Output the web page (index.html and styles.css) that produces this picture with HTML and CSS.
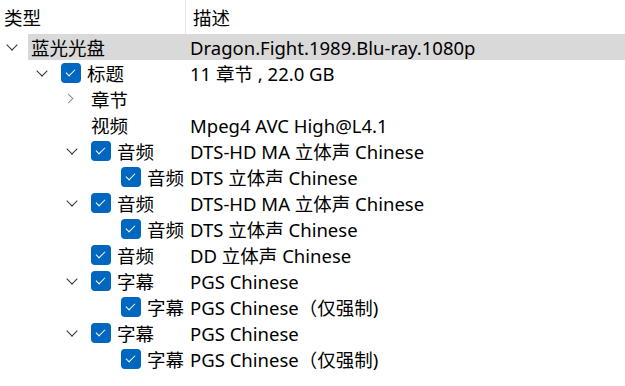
FILE: index.html
```html
<!DOCTYPE html>
<html lang="zh-CN">
<head>
  <meta charset="UTF-8" />
  <title>光盘结构</title>
  <link rel="stylesheet" href="styles.css">
</head>
<body>
  <div class="tree">
    <div class="head">
      <div class="head-type">类型</div>
      <div class="head-desc">描述</div>
    </div>

    <div class="row sel lv0">
      <div class="type"><span class="exp open"></span><span class="name">蓝光光盘</span></div>
      <div class="desc">Dragon.Fight.1989.Blu-ray.1080p</div>
    </div>
    <div class="row lv1">
      <div class="type"><span class="exp open"></span><span class="chk"></span><span class="name">标题</span></div>
      <div class="desc">11 章节 , 22.0 GB</div>
    </div>
    <div class="row lv2">
      <div class="type"><span class="exp closed"></span><span class="name">章节</span></div>
      <div class="desc"></div>
    </div>
    <div class="row lv2">
      <div class="type"><span class="exp"></span><span class="name">视频</span></div>
      <div class="desc">Mpeg4 AVC High@L4.1</div>
    </div>
    <div class="row lv2">
      <div class="type"><span class="exp open"></span><span class="chk"></span><span class="name">音频</span></div>
      <div class="desc">DTS-HD MA 立体声 Chinese</div>
    </div>
    <div class="row lv3">
      <div class="type"><span class="exp"></span><span class="chk"></span><span class="name">音频</span></div>
      <div class="desc">DTS 立体声 Chinese</div>
    </div>
    <div class="row lv2">
      <div class="type"><span class="exp open"></span><span class="chk"></span><span class="name">音频</span></div>
      <div class="desc">DTS-HD MA 立体声 Chinese</div>
    </div>
    <div class="row lv3">
      <div class="type"><span class="exp"></span><span class="chk"></span><span class="name">音频</span></div>
      <div class="desc">DTS 立体声 Chinese</div>
    </div>
    <div class="row lv2">
      <div class="type"><span class="exp"></span><span class="chk"></span><span class="name">音频</span></div>
      <div class="desc">DD 立体声 Chinese</div>
    </div>
    <div class="row lv2">
      <div class="type"><span class="exp open"></span><span class="chk"></span><span class="name">字幕</span></div>
      <div class="desc">PGS Chinese</div>
    </div>
    <div class="row lv3">
      <div class="type"><span class="exp"></span><span class="chk"></span><span class="name">字幕</span></div>
      <div class="desc">PGS Chinese（仅强制)</div>
    </div>
    <div class="row lv2">
      <div class="type"><span class="exp open"></span><span class="chk"></span><span class="name">字幕</span></div>
      <div class="desc">PGS Chinese</div>
    </div>
    <div class="row lv3">
      <div class="type"><span class="exp"></span><span class="chk"></span><span class="name">字幕</span></div>
      <div class="desc">PGS Chinese（仅强制)</div>
    </div>
  </div>
</body>
</html>
```

FILE: styles.css
```css
body {
  margin: 0;
  background-color: #fff;
  color: #000;
  font-family: "Noto Sans", "Noto Sans CJK SC", sans-serif;
  font-size: 18.5px;
}

.head {
  display: flex;
  height: 34px;
  align-items: center;
}

.head-type {
  width: 181px;
  height: 100%;
  padding-left: 4px;
  border-right: 1px solid #e5e5e5;
  display: flex;
  align-items: center;
}

.head-desc {
  padding-left: 7px;
}

.row {
  display: flex;
  height: 26px;
  align-items: center;
  white-space: nowrap;
}

/* 选中行的灰色背景从展开箭头后面开始 */
.row.sel {
  background: linear-gradient(to right, transparent 28px, #d9d9d9 28px);
}

.type {
  width: 190px;
  flex: none;
  display: flex;
  align-items: center;
  box-sizing: border-box;
}

.lv1 .type { padding-left: 30px; }
.lv2 .type { padding-left: 60px; }
.lv3 .type { padding-left: 90px; }

.exp {
  width: 31px;
  height: 26px;
  flex: none;
  position: relative;
}

.exp.open::before {
  content: "";
  position: absolute;
  left: 8px;
  top: 7px;
  width: 7px;
  height: 7px;
  border-right: 1.3px solid #333;
  border-bottom: 1.3px solid #333;
  transform: rotate(45deg);
}

.exp.closed::before {
  content: "";
  position: absolute;
  left: 5px;
  top: 9px;
  width: 6px;
  height: 6px;
  border-right: 1.3px solid #8a8a8a;
  border-bottom: 1.3px solid #8a8a8a;
  transform: rotate(-45deg);
}

.chk {
  width: 20px;
  height: 20px;
  flex: none;
  margin-right: 6px;
  border-radius: 4px;
  background-color: #0067c0;
  position: relative;
}

.chk::after {
  content: "";
  position: absolute;
  left: 7px;
  top: 4px;
  width: 4px;
  height: 8px;
  border-right: 1.2px solid #fff;
  border-bottom: 1.2px solid #fff;
  transform: rotate(45deg);
}

.desc {
  flex: 1;
}
```
